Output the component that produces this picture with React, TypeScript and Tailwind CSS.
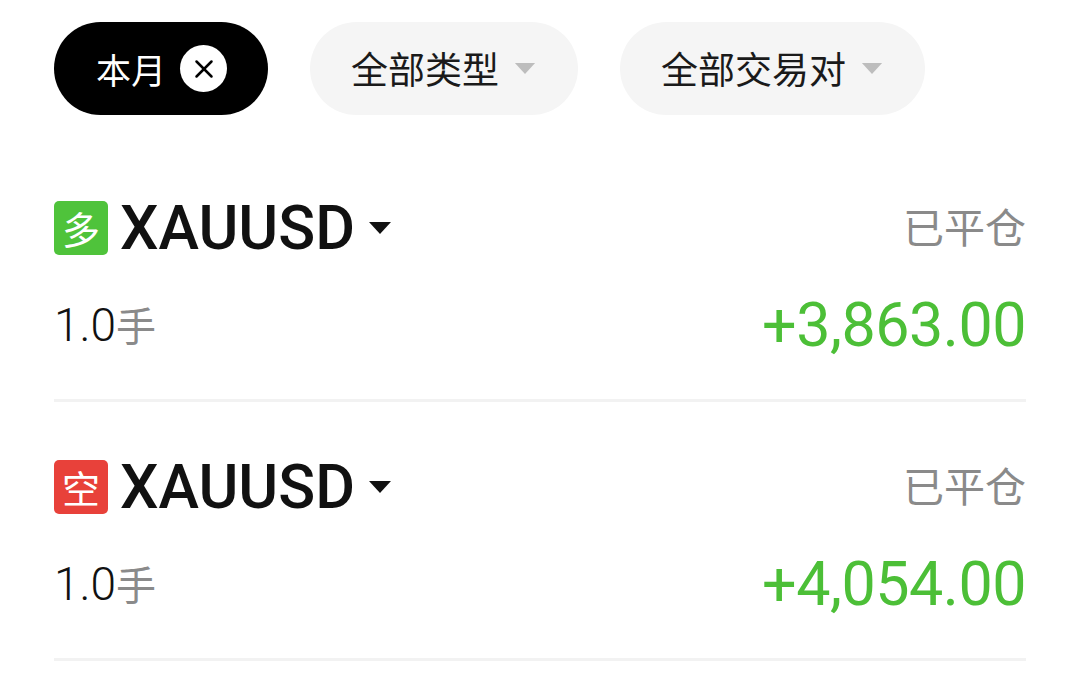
import { X } from 'lucide-react';

type Trade = {
  side: 'long' | 'short';
  symbol: string;
  lots: string;
  status: string;
  pnl: string;
};

const trades: Trade[] = [
  { side: 'long', symbol: 'XAUUSD', lots: '1.0', status: '已平仓', pnl: '+3,863.00' },
  { side: 'short', symbol: 'XAUUSD', lots: '1.0', status: '已平仓', pnl: '+4,054.00' },
];

const cjk = "font-['Noto_Sans_CJK_SC',sans-serif]";
const num = "font-['Roboto','Noto_Sans_CJK_SC',sans-serif]";

function Caret({ className }: { className: string }) {
  return (
    <svg viewBox="0 0 22 12" className={className}>
      <path d="M0 0h22L11 12z" fill="currentColor" />
    </svg>
  );
}

function FilterBar() {
  return (
    <div className="flex items-center gap-[42px] pt-[22px]">
      <div className="flex items-center h-[93px] pl-[42px] pr-[41px] rounded-full bg-black">
        <span className={`${cjk} text-[35px] leading-none text-white`}>本月</span>
        <span className="ml-[14px] flex items-center justify-center w-[47px] h-[47px] rounded-full bg-white">
          <X className="w-[30px] h-[30px] text-black" strokeWidth={2} />
        </span>
      </div>
      {['全部类型', '全部交易对'].map((label) => (
        <div
          key={label}
          className="flex items-center h-[93px] pl-[41px] pr-[42px] rounded-full bg-[#f5f5f5]"
        >
          <span className={`${cjk} text-[37px] leading-none text-[#1a1a1a]`}>{label}</span>
          <Caret className="ml-[15px] w-[22px] h-[11px] text-[#bdbdbd]" />
        </div>
      ))}
    </div>
  );
}

function TradeRow({ trade }: { trade: Trade }) {
  const long = trade.side === 'long';
  return (
    <div className="border-b-[3px] border-[#f2f2f2]">
      <div className="flex items-center justify-between h-[56px]">
        <div className="flex items-center">
          <span
            className={`flex items-center justify-center w-[54px] h-[54px] rounded-[5px] ${cjk} text-[38px] leading-none text-white ${
              long ? 'bg-[#4fc33b]' : 'bg-[#e8413a]'
            }`}
          >
            {long ? '多' : '空'}
          </span>
          <span className={`${num} ml-[12px] text-[61px] leading-none font-medium text-[#111]`}>
            {trade.symbol}
          </span>
          <Caret className="ml-[14px] w-[22px] h-[12px] text-[#111]" />
        </div>
        <span className={`${cjk} text-[41px] leading-none text-[#8a8a8a] -mt-[6px]`}>
          {trade.status}
        </span>
      </div>
      <div className="flex items-center justify-between h-[56px] mt-[41px] mb-[46px]">
        <span className="flex items-baseline">
          <span className={`${num} text-[46px] leading-none font-light text-[#111]`}>{trade.lots}</span>
          <span className={`${cjk} text-[40px] leading-none text-[#8a8a8a]`}>手</span>
        </span>
        <span className={`${num} text-[61px] leading-none tracking-[-0.5px] text-[#4cbf37]`}>
          {trade.pnl}
        </span>
      </div>
    </div>
  );
}

export default function App() {
  return (
    <div className="w-[1080px] h-[682px] overflow-hidden bg-white px-[54px]">
      <FilterBar />
      <div className="mt-[85px] flex flex-col gap-[57px]">
        {trades.map((t, i) => (
          <TradeRow key={i} trade={t} />
        ))}
      </div>
    </div>
  );
}
